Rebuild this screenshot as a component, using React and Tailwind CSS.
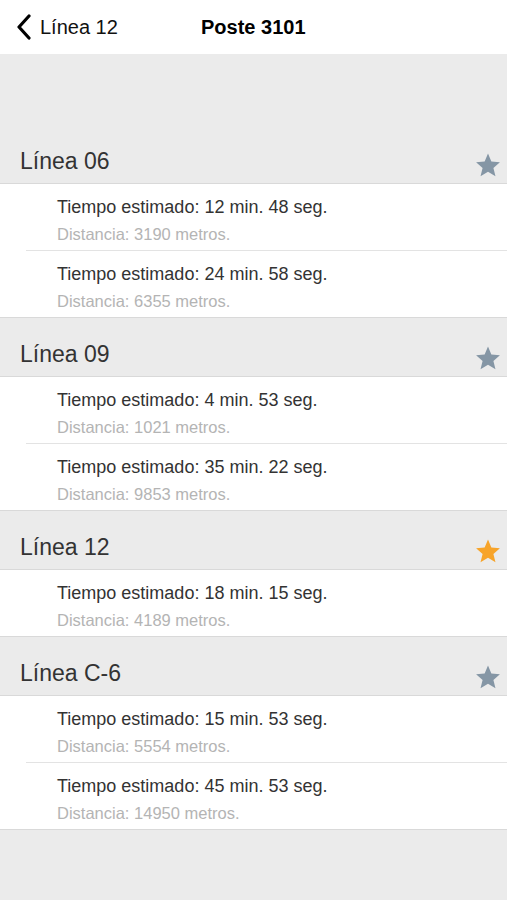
const lines = [
  {
    name: 'Línea 06',
    fav: false,
    items: [
      { time: '12 min. 48 seg.', dist: '3190' },
      { time: '24 min. 58 seg.', dist: '6355' },
    ],
  },
  {
    name: 'Línea 09',
    fav: false,
    items: [
      { time: '4 min. 53 seg.', dist: '1021' },
      { time: '35 min. 22 seg.', dist: '9853' },
    ],
  },
  {
    name: 'Línea 12',
    fav: true,
    items: [{ time: '18 min. 15 seg.', dist: '4189' }],
  },
  {
    name: 'Línea C-6',
    fav: false,
    items: [
      { time: '15 min. 53 seg.', dist: '5554' },
      { time: '45 min. 53 seg.', dist: '14950' },
    ],
  },
]

const Star = ({ color }) => (
  <svg width="26" height="25" viewBox="0 0 24 23" className={color}>
    <path
      fill="currentColor"
      d="M12 0.5l3.1 7.4 7.9 0.6-6 5.2 1.9 7.8L12 17.3l-6.9 4.2 1.9-7.8-6-5.2 7.9-0.6z"
    />
  </svg>
)

const App = () => {
  return (
    <div className="min-h-[900px] bg-[#ebebeb] font-['Liberation_Sans',Arial,sans-serif]">
      <header className="relative flex h-[54px] items-center bg-white">
        <div className="flex items-center pl-4">
          <svg width="16" height="26" viewBox="0 0 16 26" className="text-black">
            <path
              d="M13 2L3 13l10 11"
              fill="none"
              stroke="currentColor"
              strokeWidth="3.2"
              strokeLinecap="round"
              strokeLinejoin="round"
            />
          </svg>
          <span className="ml-2 text-[20px] text-[#111]">Línea 12</span>
        </div>
        <h1 className="absolute left-[201px] text-[20px] font-bold text-black">Poste 3101</h1>
      </header>

      <div className="h-[71px]" />

      {lines.map((line) => (
        <section key={line.name}>
          <div className="flex h-[59px] items-end justify-between border-b border-[#d9d9d9] pl-5 pr-[6px]">
            <h2 className="mb-[8px] text-[23px] leading-[28px] text-[#333]">{line.name}</h2>
            <div className="mb-[5px]">
              <Star color={line.fav ? 'text-[#f7a42a]' : 'text-[#8596a5]'} />
            </div>
          </div>
          <div className="border-b border-[#d9d9d9] bg-white">
            {line.items.map((item, i) => (
              <div key={i} className={i > 0 ? 'ml-[26px] border-t border-[#e3e3e3]' : ''}>
                <div className={`h-[66px] pt-[12px] ${i > 0 ? 'pl-[31px]' : 'pl-[57px]'}`}>
                  <p className="text-[18px] leading-[22px] text-[#333]">
                    Tiempo estimado: {item.time}
                  </p>
                  <p className="mt-[7px] text-[16.5px] leading-[18px] text-[#b4b4b4]">
                    Distancia: {item.dist} metros.
                  </p>
                </div>
              </div>
            ))}
          </div>
        </section>
      ))}
    </div>
  )
}

export default App
